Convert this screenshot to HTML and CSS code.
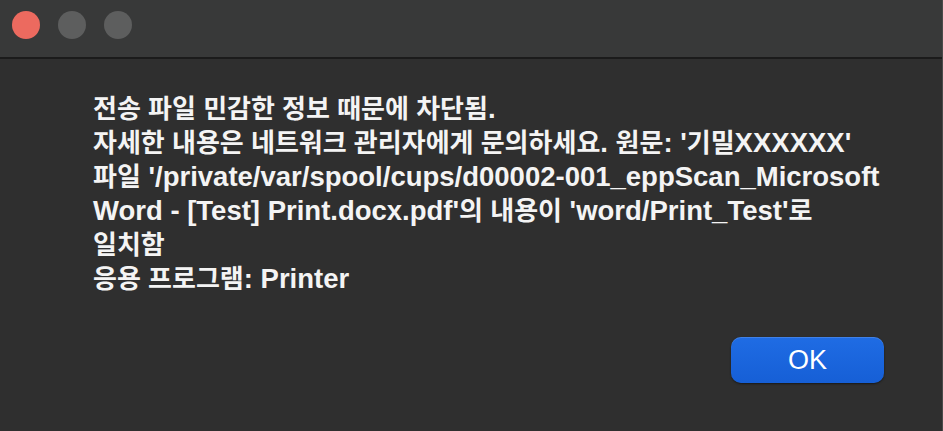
FILE: index.html
```html
<!DOCTYPE html>
<html lang="ko">
<head>
    <meta charset="UTF-8">
    <meta name="viewport" content="width=device-width, initial-scale=1.0">
    <title>Alert</title>
    <link rel="stylesheet" href="styles.css">
</head>
<body>
    <div class="window">
        <div class="titlebar">
            <span class="light close"></span>
            <span class="light"></span>
            <span class="light"></span>
        </div>
        <div class="content">
            <!-- Korean runs are wrapped so they can be sized apart from the Latin text -->
            <p class="message">
                <span class="ko">전송 파일 민감한 정보 때문에 차단됨</span>.<br>
                <span class="ko">자세한 내용은 네트워크 관리자에게 문의하세요</span>. <span class="ko">원문</span>: '<span class="ko">기밀</span>XXXXXX'<br>
                <span class="ko">파일</span> '/private/var/spool/cups/d00002-001_eppScan_Microsoft<br>
                Word - [Test] Print.docx.pdf'<span class="ko">의 내용이</span> 'word/Print_Test'<span class="ko">로</span><br>
                <span class="ko">일치함</span><br>
                <span class="ko">응용 프로그램</span>: Printer
            </p>
            <div class="actions">
                <button class="ok-button">OK</button>
            </div>
        </div>
    </div>
</body>
</html>
```

FILE: styles.css
```css
html, body {
    margin: 0;
    padding: 0;
    height: 100%;
}
body {
    background-color: #2f2f2f;
    font-family: "Liberation Sans", "Noto Sans CJK KR", sans-serif;
}
.window {
    height: 431px;
    display: flex;
    flex-direction: column;
    border-right: 1px solid #4a4a4a;
    box-sizing: border-box;
}
.titlebar {
    height: 49px;
    background-color: #383939;
    border-bottom: 2px solid #1b1b1b;
    display: flex;
    align-items: center;
    gap: 18px;
    padding-left: 12px;
    padding-bottom: 8px;
}
.light {
    width: 28px;
    height: 28px;
    border-radius: 50%;
    background-color: #5d5e5e;
}
.light.close {
    background-color: #ec6a5f;
}
.content {
    flex: 1;
    padding: 33px 40px 0 93px;
    display: flex;
    flex-direction: column;
}
.message {
    margin: 0;
    color: #f4f4f4;
    font-size: 27.5px;
    font-weight: bold;
    line-height: 34px;
    white-space: nowrap;
}
.ko {
    font-size: 26px;
}
.actions {
    display: flex;
    justify-content: flex-end;
    padding-right: 18px;
    margin-top: 41px;
}
.ok-button {
    width: 153px;
    height: 46px;
    border: none;
    border-radius: 10px;
    background: linear-gradient(#1f6ce4, #165fd6);
    box-shadow: 0 1px 2px rgba(0, 0, 0, 0.5), inset 0 1px 0 rgba(255, 255, 255, 0.15);
    color: #ffffff;
    font-family: "Liberation Sans", sans-serif;
    font-size: 27px;
    cursor: pointer;
}
```
